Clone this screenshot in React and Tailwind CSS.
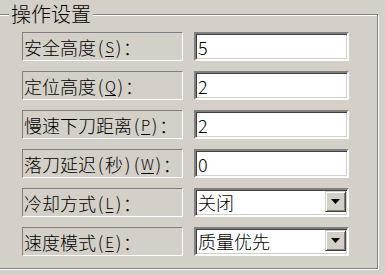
import React from "react";

const FONT = { fontFamily: '"Noto Sans CJK SC", "Noto Sans", sans-serif' };

function Half({ ch, u }) {
  return (
    <span
      className={
        "inline-block min-w-[9px] text-center " +
        (u ? "text-[15px] underline underline-offset-[3px] decoration-1" : "")
      }
    >
      {ch}
    </span>
  );
}

function Label({ cjk, mid, letter }) {
  return (
    <div className="w-[161px] h-[29px] border border-t-[#808080] border-l-[#808080] border-b-white border-r-white flex items-center pl-[1px] text-[18px] leading-none text-black whitespace-nowrap">
      <span>{cjk}</span>
      {mid && (
        <>
          <Half ch="(" />
          <span>{mid}</span>
          <Half ch=")" />
        </>
      )}
      <Half ch="(" />
      <Half ch={letter} u />
      <Half ch=")" />
      <span>：</span>
    </div>
  );
}

function Sunken({ children }) {
  return (
    <div className="w-[155px] h-[29px] border-2 border-t-[#808080] border-l-[#808080] border-b-white border-r-white bg-white shadow-[inset_1px_1px_0_#404040,inset_-1px_-1px_0_#d4d0c8]">
      {children}
    </div>
  );
}

function Input({ value }) {
  return (
    <Sunken>
      <div className="h-full flex items-center pl-[2px] text-[18px] leading-none text-black">{value}</div>
    </Sunken>
  );
}

function Combo({ value }) {
  return (
    <Sunken>
      <div className="h-full flex items-start pt-[1px] pr-[1px]">
        <div className="flex-1 h-[22px] flex items-center pl-[2px] text-[18px] leading-none text-black">{value}</div>
        <div className="w-[21px] h-[21px] bg-[#d4d0c8] border border-t-[#d4d0c8] border-l-[#d4d0c8] border-b-[#404040] border-r-[#404040] shadow-[inset_1px_1px_0_#fff,inset_-1px_-1px_0_#808080] flex items-center justify-center">
          <svg width="9" height="5" viewBox="0 0 9 5">
            <path d="M0 0H9L4.5 5Z" fill="#000" />
          </svg>
        </div>
      </div>
    </Sunken>
  );
}

const rows = [
  { cjk: "安全高度", letter: "S", value: "5" },
  { cjk: "定位高度", letter: "Q", value: "2" },
  { cjk: "慢速下刀距离", letter: "P", value: "2" },
  { cjk: "落刀延迟", mid: "秒", letter: "W", value: "0" },
  { cjk: "冷却方式", letter: "L", combo: "关闭" },
  { cjk: "速度模式", letter: "E", combo: "质量优先" },
];

export default function App() {
  return (
    <div className="w-[385px] h-[275px] bg-[#d4d0c8] overflow-hidden pt-[14px] font-light" style={FONT}>
      <div className="relative ml-[-2px] w-[380px] h-[255px] border border-[#808080] shadow-[inset_1px_1px_0_#fff,1px_1px_0_#fff]">
        <div className="absolute left-[10px] top-[-12px] px-[2px] bg-[#d4d0c8] text-[20px] leading-[22px] text-black">
          操作设置
        </div>
        <div className="pt-[17px] pl-[23px] flex flex-col gap-[10px]">
          {rows.map((r, i) => (
            <div key={i} className="flex items-center gap-[11px]">
              <Label cjk={r.cjk} mid={r.mid} letter={r.letter} />
              {r.combo ? <Combo value={r.combo} /> : <Input value={r.value} />}
            </div>
          ))}
        </div>
      </div>
    </div>
  );
}
